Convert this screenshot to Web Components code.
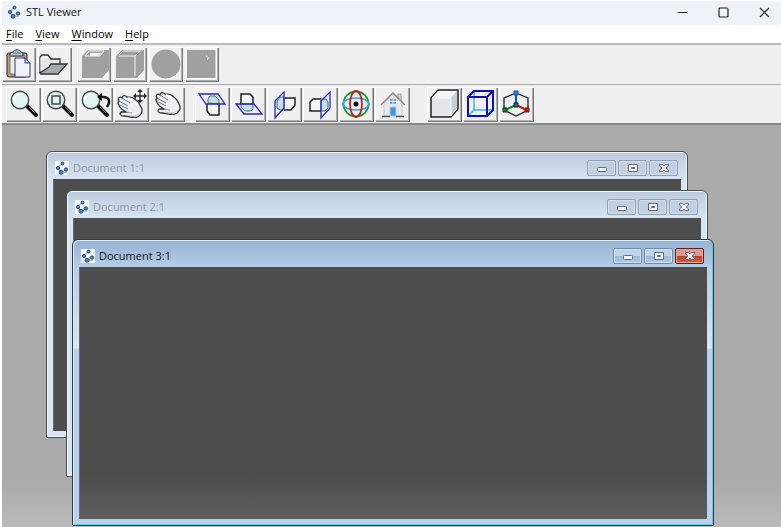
<!DOCTYPE html>
<html lang="en">
<head>
<meta charset="utf-8">
<title>STL Viewer</title>
<style>
html, body { height: 100%; margin: 0; }
body { background: #fff; font: 11px/16px "Open Sans", "Noto Sans", sans-serif; color: #111; overflow: hidden; }
</style>
</head>
<body>
<stl-app></stl-app>
<script>
const define = (name, html, setup) => customElements.define(name, class extends HTMLElement {
  connectedCallback() {
    if (this.shadowRoot) return;
    const t = document.createElement('template');
    t.innerHTML = html;
    this.attachShadow({ mode: 'open' }).append(t.content.cloneNode(true));
    if (setup) setup(this, this.shadowRoot);
  }
});

const lens = cx => `<path d="M${cx + 7} 19l9 9" stroke="#111" stroke-width="4" stroke-linecap="round"/><path d="M${cx + 9} 20l6 6" stroke="#777" stroke-width="1"/><circle cx="${cx}" cy="13" r="8.700" fill="#e2f3f2" stroke="#3b4545" stroke-width="1.400"/><path d="M${cx - 6} 13a6 6 0 0 1 6-6" stroke="#fff" stroke-width="2"/>`;
const hand = `<path d="M7 11C5 8 8 6 10 8C10 5 13 5 15 7C19 7 22 8 25 11C28 13 28 16 30 19L30 22C28 26 25 28 22 27C18 28 16 26 12 26C8 26 7 24 9 22L14 22C11 20 7 18 7 15C5 13 6 12 7 11Z" fill="#eef1f2" stroke="#333" stroke-width="1.300"/><path d="M10 8l8 5M7 11l9 5M8 15l8 4" stroke="#6b7680" stroke-width="1"/><path d="M14 22c3 0 4 1 6 1" stroke="#889" stroke-width="1"/><path d="M16 8c4 1 8 3 9 7" stroke="#fff" stroke-width="2"/><path d="M15 25c5 1 10 2 14-3" stroke="#c5ccd0"/>`;
const ICONS = {
  paste: `<rect x="5" y="6" width="20" height="24" rx="2" fill="#b09c8c" stroke="#33261e"/><path d="M8 9h14v18H8z" fill="#eeeeec" stroke="#6d5c50" stroke-width=".8"/><path d="M8 9V6l3-1c1-3 7-3 8 0l2 1v3z" fill="#b8c6c8" stroke="#333"/><path d="M11 6h8" stroke="#347f86"/><path d="M13 11h10l5 5v14H13z" fill="#f1f2f8" stroke="#333b58"/><path d="M23 11v5h5z" fill="#c7cff5" stroke="#2440aa"/>`,
  open: `<path d="M2 26V10l2-2h6l3 4h9v6" fill="#e4e6e7" stroke="#333" stroke-width="1.300"/><path d="M2 26l9-6 2-3h16l-9 10H3z" fill="#a3abaf" stroke="#333" stroke-width="1.300"/><path d="M3 24V11l7-1" stroke="#fff"/>`,
  box: `<path d="M5 9l6-6h21v20l-7 8H5z" fill="#a0a0a0"/><path d="M8 9l4-5h15l-4 5z" stroke="#f5f5f5"/><path d="M13 6v3h9l3-3z" fill="#f0f0f0"/><path d="M32 24l-6 7" stroke="#fff"/>`,
  cube: `<path d="M3 9l6-6h22v20l-7 8H3z" fill="#a0a0a0"/><path d="M6 9h16v20M22 9l5-5M6 8l4-4h18" stroke="#f5f5f5"/><path d="M31 24l-6 7" stroke="#fff"/>`,
  sphere: `<circle cx="17" cy="17" r="14.500" fill="#a0a0a0"/><path d="M28 27a14 14 0 0 1-10 5" stroke="#fff"/>`,
  solid: `<path d="M2 3h29v28H2z" fill="#a0a0a0"/><path d="M21 9h1v1M23 10v2h-1" stroke="#eee"/><path d="M2 31.500h29V3" stroke="#fff"/>`,
  zoom: lens(14),
  area: lens(14) + `<rect x="10" y="9" width="8" height="8" stroke="#444" stroke-width="1.500"/>`,
  back: lens(13) + `<path d="M29 20c4-6 2-10-4-10h-3" stroke="#111" stroke-width="2.500"/><path d="M19 10l5-4v8z" fill="#111"/>`,
  pan: `<g transform="translate(-2 3)">${hand}</g><path d="M26 4v10M21 9h10" stroke="#222" stroke-width="1.300"/><path d="M26 2l-3 3h6zM26 16l-3-3h6zM19 9l3-3v6zM33 9l-3-3v6z" fill="#222"/>`,
  rotate: hand,
  top: `<path d="M12 17v7l3 4h9V17" fill="#f5f5f5" stroke="#222" stroke-width="1.500"/><path d="M13 16v-4l2-3h5l4 4v4z" fill="#c6dede" stroke="#3b7780"/><path d="M4 7h19l7 10H11z" stroke="#2828b8" stroke-width="1.300"/>`,
  bottom: `<path d="M10 17V7h9l3 3v7" fill="#f5f5f5" stroke="#222" stroke-width="1.500"/><path d="M10 17v3l4 4h6l2-2v-5z" fill="#c6dede" stroke="#3b7780"/><path d="M5 17h18l8 10H13z" stroke="#2828b8" stroke-width="1.300"/>`,
  left: `<path d="M17 11h11v7l-4 5h-7" fill="#f5f5f5" stroke="#222" stroke-width="1.500"/><path d="M17 10h-4l-3 4v7l3 2h4z" fill="#c6dede" stroke="#3b7780"/><path d="M8 14l9-9v16l-9 10z" stroke="#2828b8" stroke-width="1.300"/>`,
  right: `<path d="M18 12h-8l-3 3v9h11" fill="#f5f5f5" stroke="#222" stroke-width="1.500"/><path d="M18 12h5l2 3v6l-3 3h-4z" fill="#c6dede" stroke="#3b7780"/><path d="M18 14l9-9v16l-9 10z" stroke="#2828b8" stroke-width="1.300"/>`,
  orbit: `<circle cx="17" cy="17" r="12.500" stroke="#159b28" stroke-width="1.800"/><ellipse cx="17" cy="17" rx="13" ry="6" stroke="#35a5dc" stroke-width="1.500"/><ellipse cx="17" cy="17" rx="6" ry="13" stroke="#c8201f" stroke-width="1.800"/><circle cx="17" cy="17" r="2.500" fill="#111"/>`,
  home: `<path d="M23 7h3v7h-3z" fill="#ddd" stroke="#999"/><path d="M9 15l9-9 9 9v14H9z" fill="#e8eaed" stroke="#c4c8cc"/><path d="M6 18L18 6l12 12" stroke="#888" stroke-width="1.500"/><path d="M7 19L18 8l11 11" stroke="#fafafa"/><path d="M15 12h6v5h-6z" fill="#62a9d4"/><path d="M18 12v5M15 14.500h6" stroke="#eee"/><path d="M15 20h6v9h-6z" fill="#4596d4" stroke="#a9cce5"/><path d="M7 29.500h8M21 29.500h8" stroke="#555" stroke-width="1.500"/>`,
  shaded: `<path d="M4 11l7-8h20v19l-7 8H4z" fill="#e3e6ea" stroke="#222" stroke-width="1.500"/><path d="M5 11l6-7h19l-6 7z" fill="#f5f6f7"/><path d="M24 11l6-7v18l-6 7z" fill="#c9ced5"/><path d="M5 11h19v18" stroke="#fafafa"/>`,
  wire: `<path d="M11 4v19h19M5 29l6-6" stroke="#45b5dd" stroke-width="1.500"/><path d="M5 10h19v19H5zM5 10l6-6h19v19l-6 6M24 10l6-6" stroke="#1010b0" stroke-width="2"/>`,
  axes: `<path d="M17 6l12 5v12l-12 6-12-6V11z" stroke="#222" stroke-width="1.300"/><path d="M17 18V6" stroke="#1749ca" stroke-width="2"/><path d="M17 18l11 5" stroke="#c41616" stroke-width="2"/><path d="M17 18L6 23" stroke="#107e22" stroke-width="2"/><path d="M15 4h4v4h-4z" fill="#2b87e5" stroke="#1749aa"/><path d="M15 16h4v4h-4z" fill="#27727a" stroke="#123"/><path d="M26 21h4v4h-4z" fill="#c41616" stroke="#901010"/><path d="M4 21h4v4H4z" fill="#168326" stroke="#053d10"/>`
};

define('app-mark', `<style>
:host { display: block; width: 14px; height: 14px; flex: none; }
svg { display: block; }
</style>
<svg width="14" height="14" viewBox="0 0 14 14" fill="none" aria-hidden="true"><path d="M8 2L3 6l3 6 5-3M4 13l8-2" stroke="#a5a9b0"/><g fill="#3c86cf" stroke="#1c3f72" stroke-width=".8"><circle cx="7.500" cy="2.500" r="1.500"/><circle cx="3" cy="7" r="1.700"/><circle cx="11" cy="8.500" r="1.700"/><circle cx="6" cy="11.300" r="2"/></g></svg>`);

define('tool-button', `<style>
:host { display: block; flex: none; width: var(--tool-width, 35px); height: 35px; }
button { display: block; box-sizing: border-box; width: 100%; height: 100%; padding: 0; border: 0; overflow: hidden;
  background: #f0f0f0; box-shadow: inset 1px 1px #fff, inset -1px -1px #777, inset -2px -2px #b0b0b0; }
svg { display: block; }
</style><button type="button"></button>`, (el, root) => {
  const b = root.querySelector('button');
  b.setAttribute('aria-label', el.getAttribute('label'));
  b.disabled = el.hasAttribute('disabled');
  b.innerHTML = `<svg width="35" height="35" viewBox="0 0 35 35" fill="none">${ICONS[el.getAttribute('icon')]}</svg>`;
});

define('tool-bar', `<style>
:host { display: flex; align-items: center; flex: none; box-sizing: border-box; background: #f0f0f0; }
</style><slot></slot>`);

define('tool-group', `<style>:host { display: flex; gap: var(--tool-gap, 1px); }</style><slot></slot>`);

define('title-bar', `<style>
:host { display: flex; align-items: center; flex: none; height: 22px; padding: 0 0 2px 5px; background: #eef3f9; }
h1 { flex: 1; margin: 0 0 0 5px; font: inherit; }
.controls { display: flex; gap: 11px; padding-right: 2px; }
button { width: 30px; height: 22px; padding: 0; border: 0; background: none; display: grid; place-items: center; }
</style>
<app-mark></app-mark><h1><slot></slot></h1>
<div class="controls">
<button type="button" aria-label="Minimize"><svg width="11" height="11" viewBox="0 0 11 11" fill="none" stroke="#222"><path d="M1 5.500h9"/></svg></button>
<button type="button" aria-label="Maximize"><svg width="11" height="11" viewBox="0 0 11 11" fill="none" stroke="#222" stroke-width="1.200"><rect x="1" y="1" width="9" height="9" rx="1"/></svg></button>
<button type="button" aria-label="Close"><svg width="11" height="11" viewBox="0 0 11 11" fill="none" stroke="#222" stroke-width="1.200"><path d="M1 1l9 9M10 1l-9 9"/></svg></button>
</div>`);

define('menu-bar', `<style>
:host { display: block; flex: none; background: #fff; }
nav { display: flex; gap: 12px; height: 18px; padding-left: 4px; }
button { padding: 0; border: 0; background: none; font: inherit; line-height: 18px; color: #000; }
u { text-underline-offset: 2px; }
</style>
<nav><button type="button"><u>F</u>ile</button><button type="button"><u>V</u>iew</button><button type="button"><u>W</u>indow</button><button type="button"><u>H</u>elp</button></nav>`);

define('doc-window', `<style>
:host { position: absolute; display: flex; flex-direction: column; box-sizing: border-box; width: 642px; height: 287px;
  padding: 0 6px 6px; border: 1px solid #4b4f54; border-radius: 6px 6px 1px 1px;
  background: linear-gradient(#bccbdc, #d8e5f3 28px, #d8e5f3); box-shadow: inset 0 0 0 1px #edf5fb; color: #8f969e; }
:host([active]) { background: linear-gradient(#96b2d1, #b5cee8 28px, #d9e7f4 108px, #b9d1ea 109px);
  border-color: #2c3b45; box-shadow: inset 1px 1px #d8eef9, inset -1px -1px #58d0e8; color: #111; }
header { display: flex; align-items: center; flex: none; height: 27px; padding: 5px 3px 0 2px; box-sizing: border-box; }
app-mark { background: #f6f8fa; }
h2 { flex: 1; margin: 0 0 0 4px; font: inherit; }
.controls { display: flex; gap: 2px; }
button { box-sizing: border-box; width: 29px; height: 16px; padding: 0; border: 1px solid #8e9fba; border-radius: 2px; display: grid; place-items: center;
  background: #c1cfdf; box-shadow: inset 0 0 0 1px #d3deea; }
:host([active]) button { background: linear-gradient(#bfd3e9 50%, #9bb8d7 50%, #b3cce5); border-color: #6f8bad; box-shadow: inset 0 0 0 1px #cfe0f1; }
:host([active]) .close { background: linear-gradient(#df9a8e 50%, #bd3c25 50%, #d0674f); border-color: #5a2028; box-shadow: inset 0 0 0 1px #e5a294; }
.view { flex: 1; box-sizing: border-box; background: #4d4d4d; border: 1px solid #656a70; border-width: 0 0 0 1px; }
:host([active]) .view { background: linear-gradient(#4d4d4d calc(100% - 44px), #5e5e5e); }
</style>
<header><app-mark></app-mark><h2><slot></slot></h2>
<div class="controls">
<button type="button" aria-label="Minimize"><svg width="12" height="10" viewBox="0 0 12 10"><rect x="1.500" y="4.500" width="9" height="4" rx="1" fill="#f5f5f5" stroke="#646b80"/></svg></button>
<button type="button" aria-label="Maximize"><svg width="12" height="10" viewBox="0 0 12 10"><path d="M1.500 1.500h9v7h-9z" fill="#f5f5f5" stroke="#646b80"/><path d="M4.500 4.500h3v1h-3z" fill="#a4b3c7" stroke="#646b80"/></svg></button>
<button type="button" class="close" aria-label="Close"><svg width="12" height="10" viewBox="0 0 12 10"><path d="M1.500 1.500h3L6 3l1.500-1.500h3v1.500L8 5l2.500 2v1.500h-3L6 7 4.500 8.500h-3V7L4 5 1.500 3z" fill="#f5f5f5" stroke="#646b80"/></svg></button>
</div></header>
<div class="view"></div>`);

define('stl-app', `<style>
:host { display: flex; flex-direction: column; box-sizing: border-box; height: 100vh; padding: 1px 0 0 2px; }
menu-bar { padding-bottom: 0; }
.files { height: 41px; border-top: 2px solid #b9bbb9; gap: 5px; --tool-width: 34px; --tool-gap: 2px; }
.views { height: 41px; border-top: 1px solid #a9aba9; border-bottom: 2px solid #8a8a8a; padding-left: 4px; }
.views tool-group + tool-group { margin-left: 10px; }
.views tool-group:last-child { margin-left: 17px; }
main { position: relative; flex: 1; min-height: 0; overflow: hidden; background: linear-gradient(#ababab calc(100% - 44px), #bababa); }
.d1 { left: 44px; top: 26px; }
.d2 { left: 64px; top: 65px; }
.d3 { left: 70px; top: 114px; }
</style>
<title-bar>STL Viewer</title-bar>
<menu-bar></menu-bar>
<tool-bar class="files">
<tool-group><tool-button icon="paste" label="New"></tool-button><tool-button icon="open" label="Open"></tool-button></tool-group>
<tool-group><tool-button icon="box" label="Box" disabled></tool-button><tool-button icon="cube" label="Cube" disabled></tool-button><tool-button icon="sphere" label="Sphere" disabled></tool-button><tool-button icon="solid" label="Solid" disabled></tool-button></tool-group>
</tool-bar>
<tool-bar class="views">
<tool-group><tool-button icon="zoom" label="Zoom"></tool-button><tool-button icon="area" label="Zoom window"></tool-button><tool-button icon="back" label="Previous zoom"></tool-button><tool-button icon="pan" label="Pan"></tool-button><tool-button icon="rotate" label="Rotate"></tool-button></tool-group>
<tool-group><tool-button icon="top" label="Top view"></tool-button><tool-button icon="bottom" label="Bottom view"></tool-button><tool-button icon="left" label="Left view"></tool-button><tool-button icon="right" label="Right view"></tool-button><tool-button icon="orbit" label="Orbit"></tool-button><tool-button icon="home" label="Home"></tool-button></tool-group>
<tool-group><tool-button icon="shaded" label="Shaded"></tool-button><tool-button icon="wire" label="Wireframe"></tool-button><tool-button icon="axes" label="Axes"></tool-button></tool-group>
</tool-bar>
<main>
<doc-window class="d1">Document 1:1</doc-window>
<doc-window class="d2">Document 2:1</doc-window>
<doc-window class="d3" active>Document 3:1</doc-window>
</main>`);
</script>
</body>
</html>
